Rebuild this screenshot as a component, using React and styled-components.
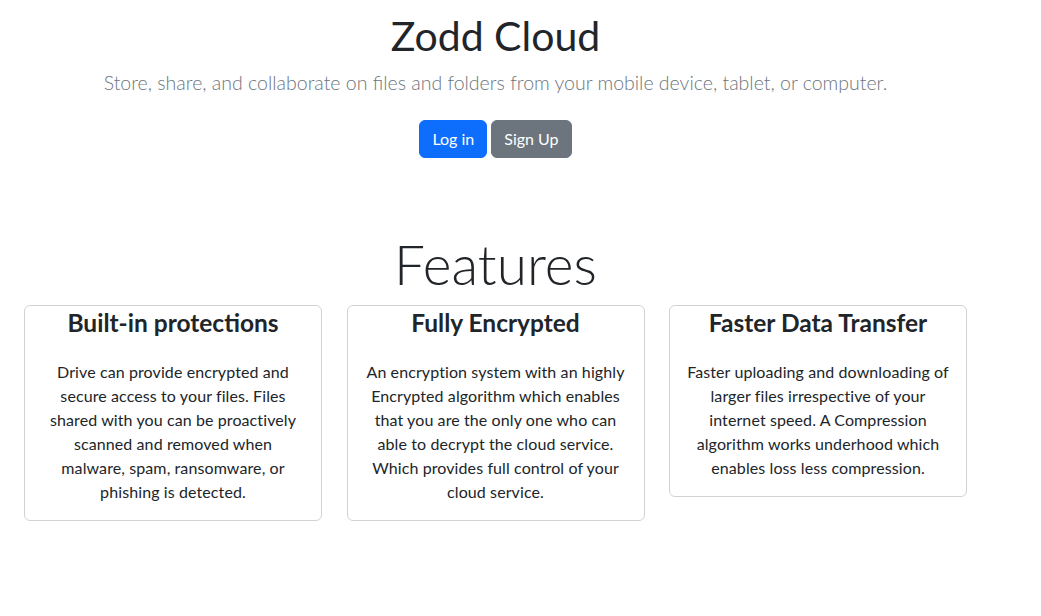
import React from 'react';
import styled, { createGlobalStyle } from 'styled-components';

const GlobalStyle = createGlobalStyle`
  body {
    margin: 0;
    background: #fff;
    color: #212529;
    font-family: Lato, "Noto Sans", sans-serif;
    font-size: 16px;
    line-height: 1.5;
  }
`;

const Page = styled.div`
  width: 991px;
  text-align: center;
`;

const Hero = styled.header`
  padding-top: 11px;
`;

const Title = styled.h1`
  margin: 0;
  font-size: 41px;
  font-weight: 400;
  line-height: 1.2;
`;

const Lead = styled.p`
  margin: 8px 0 0;
  font-size: 19.5px;
  font-weight: 300;
  color: #6c757d;
`;

const Buttons = styled.div`
  display: flex;
  justify-content: center;
  gap: 4px;
  margin-top: 23px;
`;

const Button = styled.button`
  font-family: inherit;
  font-size: 16px;
  line-height: 1.5;
  padding: 6px 12px;
  border: 1px solid ${p => p.$bg};
  border-radius: 6px;
  color: #fff;
  background: ${p => p.$bg};
  cursor: pointer;
`;

const SectionTitle = styled.h2`
  margin: 73px 0 8px;
  font-size: 55px;
  font-weight: 300;
  line-height: 1.2;
`;

const Cards = styled.div`
  display: grid;
  grid-template-columns: repeat(3, 298px);
  column-gap: 24.5px;
  align-items: start;
  padding-left: 24px;
`;

const Card = styled.div`
  border: 1px solid rgba(0, 0, 0, 0.175);
  border-radius: 6px;
  padding: 0 16px 16px;
`;

const CardTitle = styled.h3`
  margin: 0 0 20px;
  font-size: 24.5px;
  font-weight: 700;
  line-height: 1.35;
`;

const CardText = styled.p`
  margin: 0;
  letter-spacing: 0.1px;
`;

const features = [
  {
    title: 'Built-in protections',
    text: 'Drive can provide encrypted and secure access to your files. Files shared with you can be proactively scanned and removed when malware, spam, ransomware, or phishing is detected.',
  },
  {
    title: 'Fully Encrypted',
    text: 'An encryption system with an highly Encrypted algorithm which enables that you are the only one who can able to decrypt the cloud service. Which provides full control of your cloud service.',
  },
  {
    title: 'Faster Data Transfer',
    text: 'Faster uploading and downloading of larger files irrespective of your internet speed. A Compression algorithm works underhood which enables loss less compression.',
  },
];

const App = () => {
  return (
    <Page>
      <GlobalStyle />
      <Hero>
        <Title>Zodd Cloud</Title>
        <Lead>Store, share, and collaborate on files and folders from your mobile device, tablet, or computer.</Lead>
        <Buttons>
          <Button $bg="#0d6efd">Log in</Button>
          <Button $bg="#6c757d">Sign Up</Button>
        </Buttons>
      </Hero>
      <SectionTitle>Features</SectionTitle>
      <Cards>
        {features.map((f) => (
          <Card key={f.title}>
            <CardTitle>{f.title}</CardTitle>
            <CardText>{f.text}</CardText>
          </Card>
        ))}
      </Cards>
    </Page>
  );
};

export default App;
